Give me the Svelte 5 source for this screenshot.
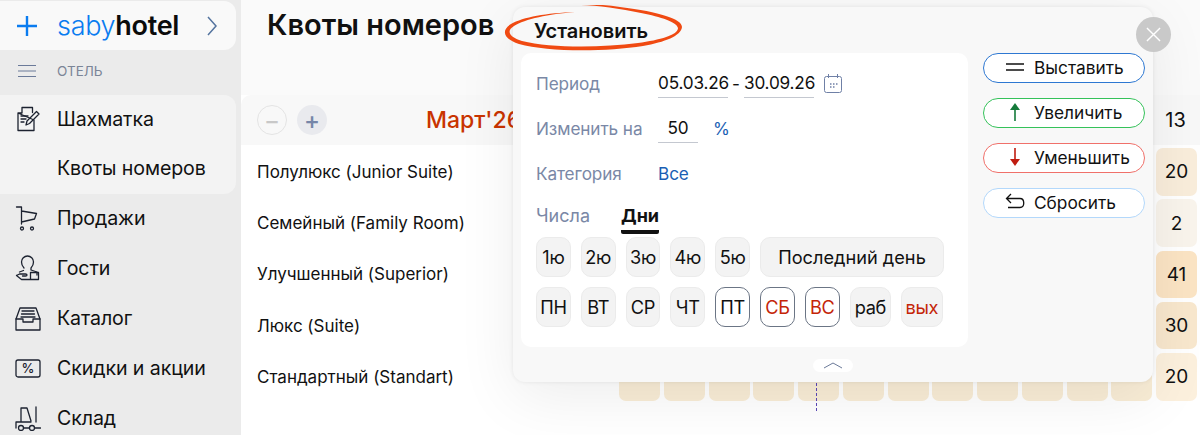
<script>
  const nav = ['Продажи', 'Гости', 'Каталог', 'Скидки и акции', 'Склад'];
  const rooms = [
    { name: 'Полулюкс (Junior Suite)', total: 20, tone: '#f9eddb' },
    { name: 'Семейный (Family Room)', total: 2, tone: '#f9f4ec' },
    { name: 'Улучшенный (Superior)', total: 41, tone: '#fbe4c4' },
    { name: 'Люкс (Suite)', total: 30, tone: '#f8e7cd' },
    { name: 'Стандартный (Standart)', total: 20, tone: '#fcf0dd' }
  ];
  const weeks = ['1ю', '2ю', '3ю', '4ю', '5ю'];
  const days = [
    { t: 'ПН' }, { t: 'ВТ' }, { t: 'СР' }, { t: 'ЧТ' },
    { t: 'ПТ', on: true }, { t: 'СБ', on: true, red: true }, { t: 'ВС', on: true, red: true },
    { t: 'раб', wide: true }, { t: 'вых', wide: true, red: true }
  ];
  const actions = [
    { t: 'Выставить', c: 'set' },
    { t: 'Увеличить', c: 'up' },
    { t: 'Уменьшить', c: 'down' },
    { t: 'Сбросить', c: 'reset' }
  ];
</script>

{#snippet navIcon(name)}
  <svg class="nav-icon" viewBox="0 0 26 26" fill="none" stroke="#1c2230" stroke-width="1.3" stroke-linejoin="round" stroke-linecap="round">
    {#if name === 'Шахматка'}
      <path d="M7 1.500h10.500v5M19 14v10.500H3V7z M7 1.500V7H3" />
      <path d="M6 10h7M6 13h5M6 16h3" />
      <path d="M11 19l1-4 9.500-9.500 2.500 2.500-9.500 9.500z" />
    {:else if name === 'Продажи'}
      <path d="M1.500 2h5v17M6.500 6l15 2.500-2 5.500-13 3" />
      <circle cx="7" cy="23.500" r="1.500" />
      <circle cx="17" cy="23.500" r="1.500" />
    {:else if name === 'Гости'}
      <path d="M9 13c-2-2-2.500-3.500-2.500-6a6 6 0 0 1 12 0c0 2.500-.5 4-2.500 6v2l6 2v3" />
      <path d="M8.500 15.500l-4 1.500" />
      <path d="M1.500 20.500l3-1.500h6c2 0 2 2 0 2h-3M1.500 20.500l5 4h17v-7h-8v7" />
    {:else if name === 'Каталог'}
      <path d="M1 14L5 3h16l4 11v11H1z" />
      <path d="M1 14h7v3h10v-3h7" />
      <path d="M7 6h12M6.500 9h13M6 12h14" />
    {:else if name === 'Скидки и акции'}
      <rect x="1" y="5" width="24" height="17" rx="2" />
      <text x="13" y="18" text-anchor="middle" class="pct">%</text>
    {:else}
      <path d="M1 23v-6h5V3h6l4 13M6 17h10" />
      <path d="M21 2v15" />
      <circle cx="6" cy="23" r="2.500" />
      <circle cx="17" cy="23" r="2.500" />
      <path d="M20 23h5.500M9 23h5" />
    {/if}
  </svg>
{/snippet}

<div class="page">
  <aside class="sidebar">
    <div class="logo-card">
      <svg class="logo-plus" viewBox="0 0 20 20" fill="none" stroke="#0a7cf0" stroke-width="2.400"><path d="M10 0v20M0 10h20" /></svg>
      <span class="logo"><span class="saby">saby</span><b>hotel</b></span>
      <svg class="logo-arrow" viewBox="0 0 10 20" fill="none" stroke="#54749f" stroke-width="1.500"><path d="M1 1l8 9-8 9" /></svg>
    </div>
    <div class="section">
      <svg class="burger" viewBox="0 0 18 12" fill="none" stroke="#6b7a99" stroke-width="1"><path d="M0 .5h18M0 6h18M0 11.500h18" /></svg>
      <span>ОТЕЛЬ</span>
    </div>
    <div class="group">
      <div class="nav-item">{@render navIcon('Шахматка')}<span>Шахматка</span></div>
      <div class="nav-item"><span class="nav-spacer"></span><span>Квоты номеров</span></div>
    </div>
    {#each nav as item}
      <div class="nav-item">{@render navIcon(item)}<span>{item}</span></div>
    {/each}
  </aside>

  <main class="main">
    <h1>Квоты номеров</h1>
    <div class="band">
      <div class="zoom-btns">
        <span class="round minus">−</span>
        <span class="round plus">+</span>
      </div>
      <span class="month">Март'26</span>
      <span class="band-total">13</span>
    </div>
    <div class="rows">
      {#each rooms as room, r}
        <div class="row">
          <span class="room">{room.name}</span>
          <div class="cells">
            {#each Array(12) as _, i}
              <div class="cell" class:today={r === 4 && i === 4}></div>
            {/each}
            <div class="cell total" style="background: {room.tone}">{room.total}</div>
          </div>
        </div>
      {/each}
    </div>
  </main>

  <section class="modal">
    <div class="modal-title">Установить</div>
    <div class="modal-body">
      <div class="form">
        <div class="field">
          <span class="label">Период</span>
          <span class="input date">05.03.26</span>
          <span class="dash">-</span>
          <span class="input date">30.09.26</span>
          <svg class="calendar" viewBox="0 0 18 19" fill="none" stroke="#6f80a6" stroke-width="1"><rect x=".5" y="2.500" width="17" height="16" rx="2" /><path d="M4.500 0v4M13.500 0v4" /><path d="M6 10h1.500M9 10h1.500M12 10h1.500M6 13h1.500M9 13h1.500" stroke-width="1.500" /></svg>
        </div>
        <div class="field">
          <span class="label">Изменить на</span>
          <span class="input num">50</span>
          <span class="link unit">%</span>
        </div>
        <div class="field">
          <span class="label">Категория</span>
          <span class="link">Все</span>
        </div>
        <div class="tabs">
          <span class="tab">Числа</span>
          <span class="tab active">Дни</span>
        </div>
        <div class="chips">
          {#each weeks as w}
            <span class="chip">{w}</span>
          {/each}
          <span class="chip last">Последний день</span>
        </div>
        <div class="chips">
          {#each days as d}
            <span class="chip" class:on={d.on} class:red={d.red} class:wide={d.wide}>{d.t}</span>
          {/each}
        </div>
      </div>
      <div class="actions">
        {#each actions as a}
          <div class="action {a.c}">
            <svg class="action-icon" viewBox="0 0 20 20" fill="none">
              {#if a.c === 'set'}
                <path d="M1 7h18M1 13h18" stroke="#111" stroke-width="1.600" />
              {:else if a.c === 'up'}
                <path d="M10 19V6" stroke="#157a3a" stroke-width="1.600" /><path d="M5 8l5-7 5 7z" fill="#157a3a" />
              {:else if a.c === 'down'}
                <path d="M10 1v13" stroke="#c01c10" stroke-width="1.600" /><path d="M5 12l5 7 5-7z" fill="#c01c10" />
              {:else}
                <path d="M6 2L1.500 6.500 6 11M1.500 6.500H15c5 0 5 9 0 9H3" stroke="#111" stroke-width="1.300" />
              {/if}
            </svg>
            <span>{a.t}</span>
          </div>
        {/each}
      </div>
    </div>
    <div class="collapse">
      <svg viewBox="0 0 20 7" fill="none" stroke="#6b7a99" stroke-width="1"><path d="M1 6l9-5 9 5" /></svg>
    </div>
    <span class="close">
      <svg viewBox="0 0 16 16" fill="none" stroke="#fff" stroke-width="1.500"><path d="M1 1l14 14M15 1L1 15" /></svg>
    </span>
    <svg class="scribble" viewBox="0 0 180 46" fill="#f04a12" stroke="none">
      <path d="M72 7C44 8 20 12 8 19 -2 25 0 34 16 39c28 8 86 8 124 2 22-4 38-10 39-19 0-8-22-15-62-20C104 0 92-1 78 0c16 0 40 4 60 8 20 4 36 9 37 15 0 7-18 12-40 15-38 5-88 5-116-2C6 32 3 26 11 21 22 14 46 9 72 7z" />
    </svg>
  </section>
</div>

<style>
  :global(body) {
    margin: 0;
    background: #fff;
    overflow: hidden;
  }

  .page {
    position: relative;
    display: flex;
    width: 1200px;
    height: 435px;
    overflow: hidden;
    font-family: Inter, "Noto Sans", sans-serif;
    color: #111;
  }

  .sidebar {
    width: 241px;
    flex-shrink: 0;
    background: #ebebeb;
  }

  .logo-card {
    display: flex;
    align-items: center;
    width: 236px;
    height: 49px;
    margin-top: 1px;
    box-sizing: border-box;
    padding-left: 17px;
    background: #f9f9f9;
    border-radius: 0 12px 12px 0;
  }

  .logo-plus {
    width: 20px;
    height: 20px;
  }

  .logo {
    margin-left: 20px;
    font-size: 27px;
    letter-spacing: -0.3px;
    line-height: 1;
  }

  .saby {
    color: #0a7cf0;
    font-weight: 300;
  }

  .logo b {
    font-weight: 600;
    color: #0b0b0b;
  }

  .logo-arrow {
    width: 10px;
    height: 20px;
    margin-left: 28px;
  }

  .section {
    display: flex;
    align-items: center;
    height: 41px;
    padding: 0 0 4px 18px;
    font-size: 13.500px;
    color: #7b8597;
  }

  .burger {
    width: 18px;
    height: 12px;
    margin-right: 21px;
  }

  .group {
    width: 236px;
    height: 99px;
    background: #f3f3f3;
    border-radius: 0 12px 12px 0;
  }

  .nav-item {
    display: flex;
    align-items: center;
    height: 50px;
    box-sizing: border-box;
    padding: 0 0 2px 15px;
    font-size: 19.600px;
    letter-spacing: -0.1px;
  }

  .group .nav-item {
    height: 49.500px;
  }

  .nav-icon {
    width: 26px;
    height: 26px;
    margin-right: 16px;
    flex-shrink: 0;
  }

  .pct {
    font-family: Inter, sans-serif;
    font-size: 13px;
    font-weight: 500;
    fill: #1c2230;
    stroke: none;
  }

  .nav-spacer {
    width: 42px;
  }

  .main {
    flex: 1;
    min-width: 0;
    background: #fff;
  }

  h1 {
    margin: 0;
    height: 95px;
    box-sizing: border-box;
    padding: 8px 0 0 26px;
    font-size: 29px;
    line-height: 34px;
    font-weight: 600;
    background: #fafafa;
  }

  .band {
    display: flex;
    align-items: center;
    height: 50px;
    padding-left: 16px;
    background: #f8f8f8;
    border-radius: 10px 0 0 0;
    position: relative;
  }

  .zoom-btns {
    display: flex;
    gap: 10px;
  }

  .round {
    display: flex;
    align-items: center;
    justify-content: center;
    width: 30px;
    height: 30px;
    box-sizing: border-box;
    border-radius: 50%;
    font-size: 24px;
    font-weight: 500;
  }

  .minus {
    border: 1px solid #e4e4e4;
    color: #c8c8c8;
  }

  .plus {
    background: #e9eaee;
    color: #7686a8;
  }

  .month {
    margin-left: 99px;
    font-size: 23px;
    font-weight: 500;
    color: #c93400;
    white-space: nowrap;
  }

  .band-total {
    margin-left: auto;
    width: 41px;
    margin-right: 4px;
    text-align: center;
    font-size: 20px;
  }

  .rows {
    padding-top: 3px;
  }

  .row {
    display: flex;
    align-items: center;
    height: 47.500px;
    margin-bottom: 3.800px;
    padding-left: 16px;
  }

  .room {
    width: 362px;
    flex-shrink: 0;
    font-size: 17px;
  }

  .cells {
    display: grid;
    grid-template-columns: repeat(13, 41px);
    gap: 3.750px;
    height: 100%;
  }

  .cell {
    position: relative;
    background: #f9edd6;
    border-radius: 7px;
  }

  .cell.today::after {
    content: '';
    position: absolute;
    left: 18px;
    top: 0;
    bottom: -10px;
    border-left: 1px dashed #5b47b8;
  }

  .total {
    display: flex;
    align-items: center;
    justify-content: center;
    font-size: 19px;
  }

  .modal {
    position: absolute;
    left: 513px;
    top: 7px;
    width: 640px;
    height: 375px;
    box-sizing: border-box;
    padding: 0 8px;
    background: #f8f8f8;
    border-radius: 12px;
    box-shadow: 0 15px 60px rgba(0, 0, 0, 0.075), 0 0 4px rgba(0, 0, 0, 0.08);
  }

  .modal-title {
    height: 46px;
    padding: 8px 0 0 13px;
    box-sizing: border-box;
    font-size: 20px;
    line-height: 32px;
    font-weight: 600;
  }

  .modal-body {
    display: flex;
    gap: 15px;
  }

  .form {
    width: 447px;
    height: 294px;
    box-sizing: border-box;
    padding: 14px 15px 0;
    background: #fff;
    border-radius: 10px;
  }

  .field {
    display: flex;
    align-items: center;
    height: 32px;
    margin-bottom: 13px;
    font-size: 17.200px;
    letter-spacing: -0.1px;
  }

  .label {
    width: 122px;
    flex-shrink: 0;
    color: #7a88a6;
  }

  .input {
    height: 29px;
    line-height: 29px;
    text-align: center;
    border-bottom: 1px solid #c4c8d0;
  }

  .date {
    width: 70px;
    letter-spacing: -0.2px;
  }

  .dash {
    width: 16px;
    text-align: center;
  }

  .calendar {
    width: 18px;
    height: 19px;
    margin-left: 10px;
  }

  .num {
    width: 40px;
  }

  .unit {
    margin-left: 15px;
  }

  .link {
    color: #1a5fb4;
  }

  .tabs {
    display: flex;
    gap: 31px;
    height: 34px;
    padding-top: 1px;
    font-size: 18px;
  }

  .tab {
    color: #7a88a6;
    height: 31px;
    line-height: 26px;
    box-sizing: border-box;
  }

  .tab.active {
    color: #111;
    font-weight: 700;
    border-bottom: 4px solid #111;
    border-radius: 2px;
  }

  .chips {
    display: flex;
    gap: 10px;
  }

  .chips + .chips {
    margin-top: 10px;
  }

  .chip {
    display: flex;
    align-items: center;
    justify-content: center;
    width: 34.800px;
    height: 40px;
    box-sizing: border-box;
    background: #f3f3f3;
    border: 1px solid #ebebeb;
    border-radius: 10px;
    font-size: 18.200px;
    letter-spacing: -0.3px;
  }

  .chip.last {
    width: 184px;
    letter-spacing: 0;
  }

  .chip.wide {
    width: 41.500px;
  }

  .chip.on {
    background: #fff;
    border-color: #6b7585;
  }

  .chip.red {
    color: #c42508;
  }

  .actions {
    display: flex;
    flex-direction: column;
    gap: 15px;
  }

  .action {
    display: flex;
    align-items: center;
    width: 162px;
    height: 30px;
    box-sizing: border-box;
    padding: 0 0 2px 21px;
    background: #fff;
    border: 1px solid;
    border-radius: 15px;
    font-size: 17.300px;
  }

  .action-icon {
    width: 20px;
    height: 20px;
    margin-right: 9px;
  }

  .set { border-color: #2e78d2; }
  .up { border-color: #35c25a; }
  .down { border-color: #f0706a; }
  .reset { border-color: #b3d8fb; }

  .collapse {
    position: absolute;
    left: 300px;
    top: 352px;
    display: flex;
    align-items: center;
    justify-content: center;
    width: 40px;
    height: 13px;
    background: #fff;
    border-radius: 7px;
  }

  .collapse svg {
    width: 20px;
    height: 7px;
  }

  .close {
    position: absolute;
    left: 623px;
    top: 10px;
    display: flex;
    align-items: center;
    justify-content: center;
    width: 35px;
    height: 35px;
    border-radius: 50%;
    background: #c9c9c9;
  }

  .close svg {
    width: 15px;
    height: 15px;
  }

  .scribble {
    position: absolute;
    left: -10px;
    top: -2px;
    width: 180px;
    height: 46px;
  }
</style>
